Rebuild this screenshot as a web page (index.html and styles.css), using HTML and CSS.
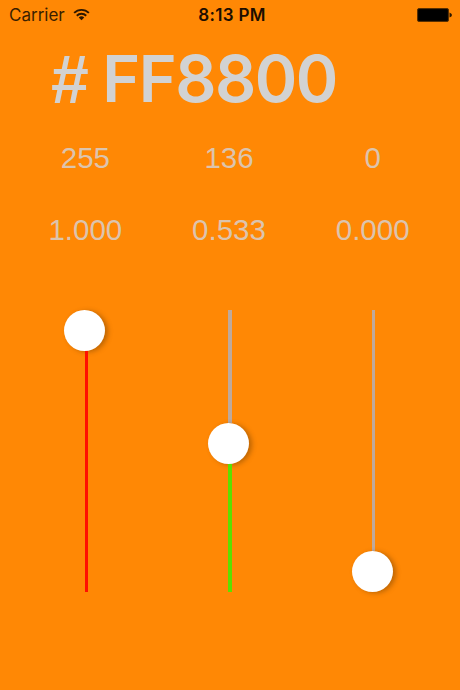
FILE: index.html
```html
<!DOCTYPE html>
<html lang="en">
<head>
    <meta charset="UTF-8">
    <meta name="viewport" content="width=device-width, initial-scale=1.0">
    <title>Color Picker</title>
    <link rel="stylesheet" href="styles.css">
</head>
<body>
    <div class="status-bar">
        <div class="carrier">
            <span>Carrier</span>
            <svg class="wifi" viewBox="0 0 18 13" width="17" height="13">
                <path d="M1.2 4.8a11 11 0 0 1 15.6 0M4 7.8a7 7 0 0 1 10 0" fill="none" stroke="#2b1700" stroke-width="2"/>
                <path d="M9 12.6L6.1 9.8a4.1 4.1 0 0 1 5.8 0z" fill="#2b1700"/>
            </svg>
        </div>
        <div class="time">8:13 PM</div>
        <div class="battery-box">
            <svg class="battery" viewBox="0 0 36 14" width="36" height="14">
                <rect x=".5" y=".5" width="31" height="13" rx="1.5" fill="#120900" stroke="#5a3000"/>
                <rect x="1.5" y="1.5" width="29" height="11" rx="1" fill="#000"/>
                <path d="M32.5 4.5q2.5 1 2.5 2.5t-2.5 2.5z" fill="#2b1700"/>
            </svg>
        </div>
    </div>

    <h1 class="hex"><span class="hash">#</span><span>FF8800</span></h1>

    <div class="channels">
        <div class="channel">
            <div class="value">255</div>
            <div class="value">1.000</div>
            <div class="slider red">
                <div class="thumb"></div>
                <div class="fill"></div>
            </div>
        </div>
        <div class="channel">
            <div class="value">136</div>
            <div class="value">0.533</div>
            <div class="slider green">
                <div class="rest" style="height: 113px"></div>
                <div class="thumb"></div>
                <div class="fill"></div>
            </div>
        </div>
        <div class="channel">
            <div class="value">0</div>
            <div class="value">0.000</div>
            <div class="slider blue">
                <div class="rest" style="height: 242px"></div>
                <div class="thumb"></div>
            </div>
        </div>
    </div>
</body>
</html>
```

FILE: styles.css
```css
* {
    box-sizing: border-box;
}
body {
    margin: 0;
    height: 690px;
    overflow: hidden;
    background-color: #ff8805;
    font-family: Inter, "Liberation Sans", sans-serif;
}
.status-bar {
    display: grid;
    grid-template-columns: 1fr auto 1fr;
    align-items: center;
    height: 30px;
    padding: 0 7px 0 9px;
    font-size: 17px;
    color: #3a1f00;
}
.carrier {
    display: flex;
    align-items: center;
    gap: 8px;
}
.wifi {
    display: block;
    margin-top: -2px;
}
.time {
    padding-left: 2px;
    font-weight: 600;
    letter-spacing: 0.3px;
    color: #1c0e00;
}
.battery-box {
    display: flex;
    justify-content: flex-end;
}
.hex {
    display: flex;
    gap: 15px;
    margin: 0;
    padding: 9px 0 0 51px;
    height: 92px;
    font-size: 64.5px;
    font-weight: 600;
    line-height: 80px;
    letter-spacing: -1.5px;
    color: #d2d2d2;
}
.hash {
    font-family: "Liberation Sans", sans-serif;
    font-size: 68px;
}
.channels {
    display: flex;
    padding: 0 16px 0 13px;
}
.channel {
    flex: 1;
}
.value {
    height: 72px;
    padding-left: 1px;
    font-family: "Liberation Sans", sans-serif;
    font-size: 29.5px;
    line-height: 72px;
    text-align: center;
    color: #dcc4ae;
}
.slider {
    display: flex;
    flex-direction: column;
    align-items: center;
    height: 282px;
    margin-top: 44px;
}
.rest,
.fill {
    width: 3px;
    margin-left: 3px;
}
.green .rest,
.green .fill {
    width: 4px;
}
.rest {
    background-color: #bfa99b;
}
.fill {
    flex: 1;
}
.red .fill {
    background-color: #ff1000;
}
.green .fill {
    background-color: #5ce000;
}
.thumb {
    width: 41px;
    height: 41px;
    flex: none;
    border-radius: 50%;
    background-color: #fff;
    box-shadow: 3px 1px 5px rgba(90, 50, 0, 0.4);
}
```
